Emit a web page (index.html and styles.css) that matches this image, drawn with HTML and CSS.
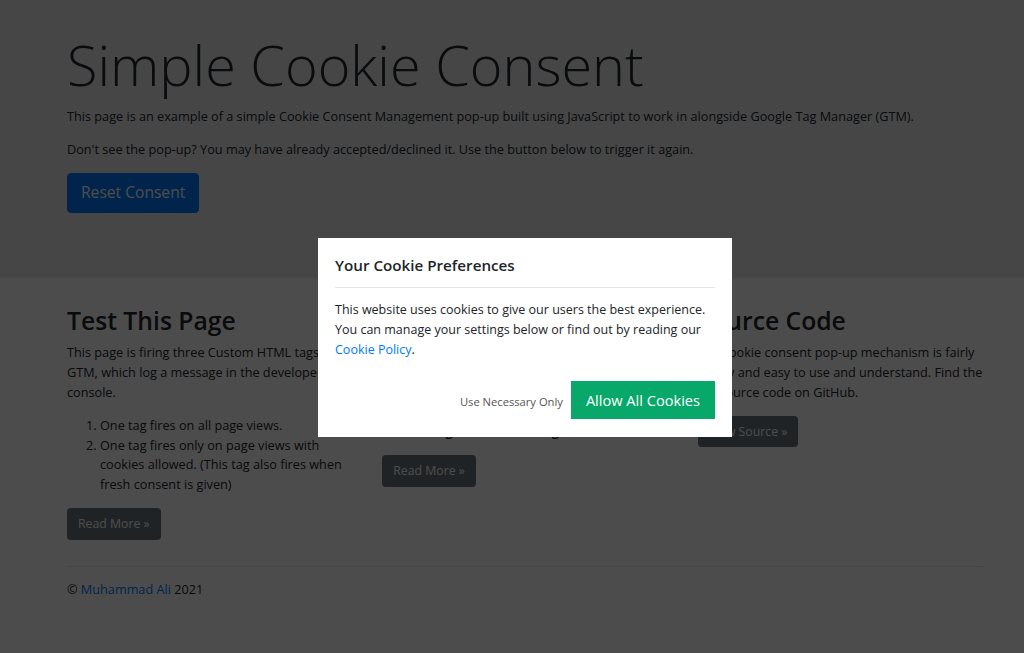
FILE: index.html
```html
<!DOCTYPE html>
<html lang="en">
<head>
<meta charset="utf-8">
<title>Simple Cookie Consent</title>
<link rel="stylesheet" href="styles.css">
</head>
<body>
<main>
  <div class="jumbotron">
    <div class="container">
      <h1 class="display">Simple Cookie Consent</h1>
      <p>This page is an example of a simple Cookie Consent Management pop-up built using JavaScript to work in alongside Google Tag Manager (GTM).</p>
      <p>Don't see the pop-up? You may have already accepted/declined it. Use the button below to trigger it again.</p>
      <p><a class="btn btn-primary btn-lg" href="#">Reset Consent</a></p>
    </div>
  </div>

  <div class="container">
    <div class="row">
      <div class="col">
        <h2>Test This Page</h2>
        <p>This page is firing three Custom HTML tags via GTM, which log a message in the developer's console.</p>
        <ol>
          <li>One tag fires on all page views.</li>
          <li>One tag fires only on page views with cookies allowed. (This tag also fires when fresh consent is given)</li>
        </ol>
        <p><a class="btn btn-secondary" href="#">Read More &raquo;</a></p>
      </div>
      <div class="col">
        <h2>Check Console</h2>
        <p>The third tag fires only when cookies are declined. Open the developer tools in your browser, accept or decline the cookies, reload this page and<br><strong>console log to see which tags fired.</strong></p>
        <p><a class="btn btn-secondary" href="#">Read More &raquo;</a></p>
      </div>
      <div class="col">
        <h2>Source Code</h2>
        <p>The cookie consent pop-up mechanism is fairly handy and easy to use and understand. Find the full source code on GitHub.</p>
        <p><a class="btn btn-secondary" href="#">View Source &raquo;</a></p>
      </div>
    </div>
    <hr>
  </div>
</main>

<footer class="container">
  <p>&copy; <a href="#">Muhammad Ali</a> 2021</p>
</footer>

<div class="backdrop"></div>
<div class="cookie-modal" role="dialog">
  <div class="cookie-header">
    <h5>Your Cookie Preferences</h5>
  </div>
  <div class="cookie-body">
    <p>This website uses cookies to give our users the best experience. You can manage your settings below or find out by reading our <a href="#">Cookie Policy</a>.</p>
  </div>
  <div class="cookie-footer">
    <a class="necessary" href="#">Use Necessary Only</a>
    <a class="allow" href="#">Allow All Cookies</a>
  </div>
</div>
</body>
</html>
```

FILE: styles.css
```css
* { box-sizing: border-box; }

html, body { margin: 0; padding: 0; }

body {
  font-family: "Open Sans", "Noto Sans", sans-serif;
  font-size: 12.7px;
  line-height: 19.8px;
  color: #212529;
  background: #fff;
  height: 653px;
  overflow: hidden;
}

a { color: #007bff; text-decoration: none; }

p { margin: 0 0 13.2px; }

.container {
  width: 946px;
  margin-left: 52px;
  padding: 0 15px;
}

.jumbotron {
  background: #e9ecef;
  padding: 29px 0 52.8px;
  margin-bottom: 26.4px;
}

.display {
  font-weight: 300;
  font-size: 55.8px;
  line-height: 71px;
  margin: 0 0 6.6px;
}

.btn {
  display: inline-block;
  border: 1px solid transparent;
  color: #fff;
  font-size: 12.3px;
  line-height: 19.8px;
  padding: 4.95px 9.9px;
  border-radius: 3.3px;
  vertical-align: middle;
}

.btn-lg {
  font-size: 15.6px;
  line-height: 24.75px;
  padding: 6.6px 13px;
  border-radius: 4px;
}

.btn-primary { background: #007bff; border-color: #007bff; }
.btn-secondary { background: #6c757d; border-color: #6c757d; }

.row {
  display: grid;
  grid-template-columns: repeat(3, 1fr);
  column-gap: 30px;
}

h2 {
  font-size: 24.7px;
  font-weight: 600;
  line-height: 31.7px;
  margin: 0 0 6.6px;
}

ol {
  margin: 0 0 13.2px;
  padding-left: 33px;
}

strong { font-weight: 700; }

hr {
  border: 0;
  border-top: 1px solid rgba(0,0,0,.1);
  margin: 13.2px 0;
}

footer p { margin: 0; }

.backdrop {
  position: fixed;
  inset: 0;
  background: rgba(0,0,0,.7);
}

.cookie-modal {
  position: absolute;
  left: 318px;
  top: 238px;
  width: 414px;
  background: #fff;
  padding: 17px 17px 18px;
}

.cookie-header {
  border-bottom: 1px solid #e5e5e5;
  padding-bottom: 12px;
}

.cookie-header h5 {
  margin: 0;
  font-size: 15.2px;
  font-weight: 600;
  line-height: 20px;
  color: #212529;
}

.cookie-body {
  padding-top: 12px;
}

.cookie-body p {
  margin: 0;
  font-size: 12.5px;
  line-height: 20px;
}

.cookie-footer {
  margin-top: 21px;
  display: flex;
  justify-content: flex-end;
  align-items: center;
  gap: 8px;
}

.necessary {
  color: #555;
  font-size: 11.2px;
  padding-top: 3px;
}

.allow {
  background: #08a86b;
  color: #fff;
  font-size: 14.6px;
  line-height: 38px;
  height: 38px;
  padding: 0 15px;
}
```
